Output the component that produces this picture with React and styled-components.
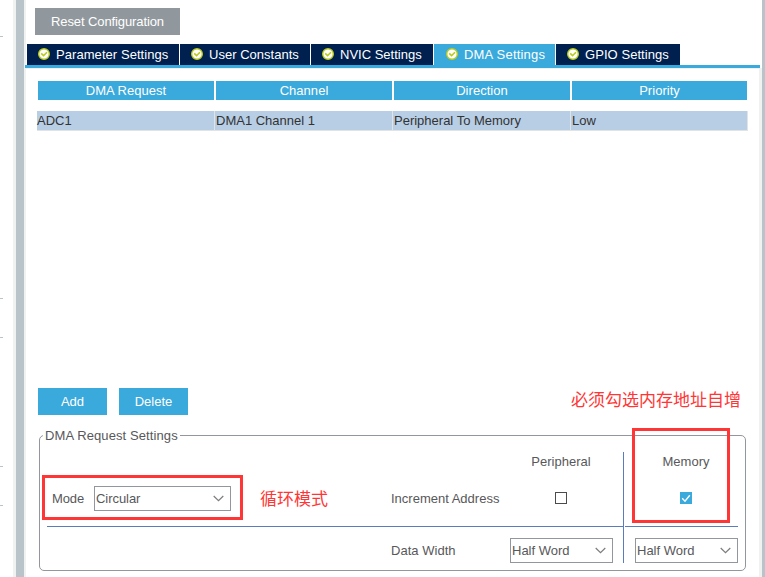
import React from 'react';
import styled, { createGlobalStyle } from 'styled-components';

const blue = '#3aa9dc';
const navy = '#00204f';
const slate = '#b8c3ca';
const pale = '#f0f1f1';
const red = '#ff3636';
const ink = '#58585a';

const GlobalStyle = createGlobalStyle`
  * { box-sizing: border-box; }
  body { margin: 0; background: #fff; overflow: hidden; }
  button { border: 0; padding: 0; margin: 0; font: inherit; }
`;

const Window = styled.div`
  display: flex;
  width: 765px;
  height: 577px;
  overflow: hidden;
  background: #fff;
  font-family: 'Liberation Sans', Arial, sans-serif;
  font-size: 13px;
  line-height: 19px;
  color: ${ink};
  white-space: nowrap;
`;

const Gutter = styled.aside`
  flex: none;
  width: 13px;
`;

const Tick = styled.div`
  width: 3px;
  height: 1px;
  margin-top: ${p => p.$gap}px;
  background: ${slate};
`;

const Splitter = styled.div`
  flex: none;
  width: 13px;
  border-left: 3px solid ${pale};
  border-right: 2px solid ${pale};
  background: ${slate};
`;

const Main = styled.main`
  position: relative;
  flex: none;
  width: 733px;
`;

const RightEdge = styled.div`
  flex: none;
  width: 6px;
  display: flex;
  flex-direction: column;
`;

const EdgeTop = styled.div`
  height: 65px;
  margin-left: 3px;
  background: ${slate};
`;

const EdgeRule = styled.div`
  height: 3px;
  border-left: 1px solid ${blue};
  background: linear-gradient(90deg, #fff 2px, ${slate} 2px);
`;

const EdgeBody = styled.div`
  height: 509px;
  border-left: 3px solid ${pale};
  background: ${slate};
`;

const Label = styled.span`
  letter-spacing: ${p => p.$track || 0}px;
`;

const ResetButton = styled.button`
  display: block;
  width: 145px;
  height: 27px;
  margin: 8px 0 9px 9px;
  background: #91989d;
  color: #fff;
  line-height: 27px;
`;

const TabBar = styled.nav`
  display: flex;
  gap: 1px;
  height: 24px;
  margin-left: -1px;
  padding-left: 2px;
  border-bottom: 3px solid ${blue};
`;

const Tab = styled.div`
  display: flex;
  align-items: center;
  gap: 6px;
  width: ${p => p.$width}px;
  height: 21px;
  padding-left: ${p => (p.$active ? 12 : 11)}px;
  background: ${p => (p.$active ? blue : navy)};
  color: #fff;
`;

const Panel = styled.div`
  height: 320px;
  padding: 12px 0 0 11px;
  border-top: 1px solid ${pale};
`;

const HeaderRow = styled.div`
  display: grid;
  grid-template-columns: 176px 176px 176px 175px;
  gap: 2px;
  margin: 0 0 11px 1px;
  height: 19px;
`;

const HeaderCell = styled.div`
  background: ${blue};
  color: #fff;
  text-align: center;
`;

const DataRow = styled.div`
  display: grid;
  grid-template-columns: 178px 178px 178px 177px;
  width: 711px;
  height: 20px;
  border-bottom: 1px solid #e1e3e4;
`;

const DataCell = styled.div`
  border-right: 1px solid #e1e3e4;
  padding-left: ${p => (p.$first ? 0 : 1)}px;
  background: #b8cee5;
  color: #333;
`;

const Actions = styled.div`
  display: flex;
  gap: 12px;
  padding-left: 12px;
`;

const ActionButton = styled.button`
  width: 69px;
  height: 27px;
  background: ${blue};
  color: #fff;
  line-height: 27px;
`;

const Group = styled.section`
  position: relative;
  display: flex;
  width: 707px;
  height: 136px;
  margin: 20px 0 0 13px;
  padding: 16px 7px 0;
  border: 1px solid #91979c;
  border-radius: 5px;
`;

const Legend = styled.div`
  position: absolute;
  left: 3px;
  top: -10px;
  width: 137px;
  padding-left: 2px;
  background: #fff;
`;

const Side = styled.div`
  width: ${p => p.$width}px;
  height: 111px;
`;

const Columns = styled.div`
  display: grid;
  grid-template-columns: ${p => p.$cols};
  align-items: center;
  height: ${p => p.$height}px;
  margin-top: ${p => p.$top || 0}px;
`;

const Heading = styled.div`
  grid-column: ${p => p.$col};
  padding-right: 1px;
  text-align: center;
`;

const Field = styled.div`
  display: grid;
  grid-template-columns: 42px 137px;
  align-items: center;
  padding-left: 5px;
`;

const Rule = styled.div`
  height: 1px;
  margin-top: 15px;
  background: #5b7cba;
`;

const Divider = styled.div`
  width: 1px;
  height: 111px;
  margin-right: 1px;
  background: #5b7cba;
`;

const Select = styled.div`
  display: flex;
  align-items: center;
  justify-content: space-between;
  width: ${p => p.$width}px;
  height: 25px;
  padding: 0 6px 0 1px;
  border: 1px solid #91979c;
`;

const Check = styled.div`
  display: flex;
  justify-self: center;
  width: 12px;
  height: 12px;
  margin: 0 1px 1px 0;
  border: ${p => (p.$on ? 'none' : '1px solid #4b4b4b')};
  background: ${p => (p.$on ? blue : '#fff')};
`;

const Highlight = styled.div`
  position: absolute;
  left: ${p => p.$x}px;
  top: ${p => p.$y}px;
  width: ${p => p.$w}px;
  height: ${p => p.$h}px;
  border: 3px solid ${red};
`;

const Note = styled.div`
  position: absolute;
  left: ${p => p.$x}px;
  top: ${p => p.$y}px;
  color: ${red};
  font-family: 'Noto Sans CJK SC', sans-serif;
  font-size: 17px;
  line-height: 24px;
`;

const StatusSvg = styled.svg`
  flex: none;
  margin-bottom: 1px;
`;

const StatusIcon = () => (
  <StatusSvg width="12" height="12" viewBox="0 0 12 12">
    <circle cx="6" cy="6" r="5.3" fill="#fff" stroke="#bccb1b" strokeWidth="1.4" />
    <path d="M3.2 5.3 5.6 7.6 9 4.3" fill="none" stroke="#bccb1b" strokeWidth="1.6" />
  </StatusSvg>
);

const Chevron = () => (
  <svg width="11" height="7" viewBox="0 0 11 7">
    <path d="M.7 1 5.5 5.7 10.3 1" fill="none" stroke="#7d7d7d" strokeWidth="1.2" />
  </svg>
);

const CheckMark = () => (
  <svg width="12" height="12" viewBox="0 0 12 12">
    <path d="M2.2 6.3 5 9.2 9.8 3.2" fill="none" stroke="#fff" strokeWidth="1.4" />
  </svg>
);

const tabs = [
  { name: 'Parameter Settings', width: 152, track: 0.06 },
  { name: 'User Constants', width: 130, track: 0.02 },
  { name: 'NVIC Settings', width: 122, track: 0 },
  { name: 'DMA Settings', width: 121, track: 0.2, active: true },
  { name: 'GPIO Settings', width: 124, track: 0.06 },
];

const headers = ['DMA Request', 'Channel', 'Direction', 'Priority'];
const row = ['ADC1', 'DMA1 Channel 1', 'Peripheral To Memory', 'Low'];

export default function App() {
  return (
    <>
      <GlobalStyle />
      <Window>
        <Gutter>
          {[36, 261, 38, 128, 38].map((gap, i) => <Tick key={i} $gap={gap} />)}
        </Gutter>
        <Splitter />
        <Main>
          <ResetButton><Label $track={-0.1}>Reset Configuration</Label></ResetButton>
          <TabBar>
            {tabs.map(t => (
              <Tab key={t.name} $width={t.width} $active={t.active}>
                <StatusIcon />
                <Label $track={t.track}>{t.name}</Label>
              </Tab>
            ))}
          </TabBar>
          <Panel>
            <HeaderRow>
              {headers.map(h => <HeaderCell key={h}><Label $track={0.03}>{h}</Label></HeaderCell>)}
            </HeaderRow>
            <DataRow>
              {row.map((c, i) => <DataCell key={c} $first={i === 0}><Label>{c}</Label></DataCell>)}
            </DataRow>
          </Panel>
          <Actions>
            <ActionButton><Label>Add</Label></ActionButton>
            <ActionButton><Label>Delete</Label></ActionButton>
          </Actions>
          <Group>
            <Legend><Label $track={0.1}>DMA Request Settings</Label></Legend>
            <Side $width={576}>
              <Columns $cols="344px 119px 103px" $height={19}>
                <Heading $col={3}><Label>Peripheral</Label></Heading>
              </Columns>
              <Columns $cols="344px 119px 103px" $height={25} $top={15}>
                <Field>
                  <Label $track={-0.1}>Mode</Label>
                  <Select $width={137}><Label $track={-0.05}>Circular</Label><Chevron /></Select>
                </Field>
                <Label>Increment Address</Label>
                <Check />
              </Columns>
              <Rule />
              <Columns $cols="344px 119px 103px" $height={25} $top={11}>
                <span />
                <Label $track={0.03}>Data Width</Label>
                <Select $width={103}><Label>Half Word</Label><Chevron /></Select>
              </Columns>
            </Side>
            <Divider />
            <Side $width={113}>
              <Columns $cols="10px 103px" $height={19}>
                <Heading $col={2}><Label>Memory</Label></Heading>
              </Columns>
              <Columns $cols="10px 103px" $height={25} $top={15}>
                <span />
                <Check $on><CheckMark /></Check>
              </Columns>
              <Rule />
              <Columns $cols="10px 103px" $height={25} $top={11}>
                <span />
                <Select $width={103}><Label>Half Word</Label><Chevron /></Select>
              </Columns>
            </Side>
          </Group>
          <Highlight $x={16} $y={475} $w={201} $h={45} />
          <Highlight $x={606} $y={428} $w={98} $h={95} />
          <Note $x={234} $y={486}>循环模式</Note>
          <Note $x={545} $y={387}>必须勾选内存地址自增</Note>
        </Main>
        <RightEdge>
          <EdgeTop />
          <EdgeRule />
          <EdgeBody />
        </RightEdge>
      </Window>
    </>
  );
}
